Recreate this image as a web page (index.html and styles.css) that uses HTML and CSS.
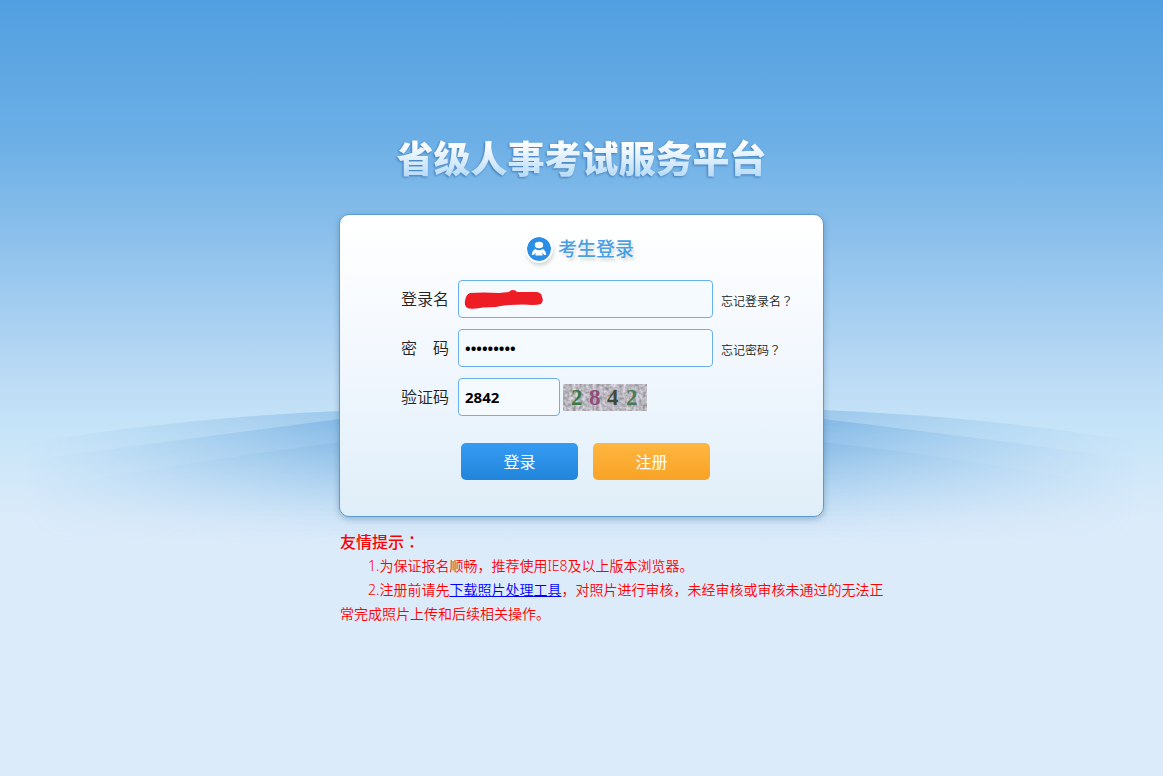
FILE: index.html
```html
<!DOCTYPE html>
<html lang="zh-CN">
  <head>
    <meta charset="UTF-8" />
    <meta name="viewport" content="width=device-width, initial-scale=1.0" />
    <title>省级人事考试服务平台</title>
    <link rel="stylesheet" href="styles.css">
  </head>
  <body>
    <!-- Background waves -->
    <svg class="waves" viewBox="0 0 1163 200" preserveAspectRatio="none" aria-hidden="true">
      <defs>
        <linearGradient id="side" x1="0" x2="1" y1="0" y2="0">
          <stop offset="0.02" stop-color="#fff" stop-opacity="0" />
          <stop offset="0.3" stop-color="#fff" stop-opacity="1" />
          <stop offset="0.7" stop-color="#fff" stop-opacity="1" />
          <stop offset="0.98" stop-color="#fff" stop-opacity="0" />
        </linearGradient>
        <mask id="fade">
          <rect width="1163" height="200" fill="url(#side)" />
        </mask>
        <linearGradient id="wave1" gradientUnits="userSpaceOnUse" x1="0" x2="0" y1="20" y2="165">
          <stop offset="0" stop-color="#7fb5e3" stop-opacity="0.65" />
          <stop offset="1" stop-color="#a9d0f0" stop-opacity="0" />
        </linearGradient>
        <linearGradient id="wave2" gradientUnits="userSpaceOnUse" x1="0" x2="0" y1="30" y2="160">
          <stop offset="0" stop-color="#5b9dd8" stop-opacity="0.5" />
          <stop offset="1" stop-color="#9cc8ec" stop-opacity="0" />
        </linearGradient>
        <linearGradient id="wave3" gradientUnits="userSpaceOnUse" x1="0" x2="0" y1="50" y2="140">
          <stop offset="0" stop-color="#5b9dd8" stop-opacity="0.25" />
          <stop offset="1" stop-color="#9cc8ec" stop-opacity="0" />
        </linearGradient>
      </defs>
      <g mask="url(#fade)">
        <path fill="url(#wave1)" d="M0 68Q170 38 340 31Q581 18 823 30Q1000 37 1163 66V200H0Z" />
        <path fill="url(#wave2)" d="M0 84Q170 61 340 39Q581 20 823 39Q1000 60 1163 84V200H0Z" />
        <path fill="url(#wave3)" d="M0 116Q170 84 340 62Q581 40 823 62Q1000 82 1163 116V200H0Z" />
      </g>
    </svg>

    <div class="wrapper">
      <h1 class="site-title">省级人事考试服务平台</h1>

      <form class="login-card">
        <h2 class="login-title">
          <svg class="user-icon" viewBox="0 0 24 24" aria-hidden="true">
            <circle cx="12" cy="12" r="12" fill="#2b8fe8" />
            <ellipse cx="12" cy="8" rx="4.2" ry="3.2" fill="#fff" />
            <path fill="#fff" d="M8 12Q12 14.500 16 12Q18.800 13.500 19.300 17.400Q17.800 18.600 16.600 17.300L15.500 15.500V18.600H8.500V15.500L7.400 17.300Q6.200 18.600 4.700 17.400Q5.200 13.500 8 12Z" />
          </svg>
          <span>考生登录</span>
        </h2>

        <div class="form-row">
          <label for="username">登录名</label>
          <div class="input-box">
            <input type="text" id="username" name="username" />
            <svg class="scribble" viewBox="0 0 80 20" aria-hidden="true">
              <path fill="#ee1c25" d="M7 3Q20 2 36 3L46 2Q47 0 50 0Q53 0 54 2L74 2Q79 3 79 7Q81 11 78 14Q73 15.500 60 14.500L46 15Q36 16 33 17L20 17.500Q14 19 6 18.500Q1 17 2 11Q3 4 7 3Z" />
            </svg>
          </div>
          <a class="forgot" href="#">忘记登录名<span class="mark" lang="ja">？</span></a>
        </div>

        <div class="form-row">
          <label for="password">密　码</label>
          <div class="input-box">
            <input type="password" id="password" name="password" value="123456789" />
          </div>
          <a class="forgot" href="#">忘记密码<span class="mark" lang="ja">？</span></a>
        </div>

        <div class="form-row">
          <label for="captcha">验证码</label>
          <input type="text" class="captcha-input" id="captcha" name="captcha" value="2842" />
          <svg class="captcha-img" viewBox="0 0 84 27" role="img" aria-label="验证码图片">
            <filter id="noise" x="0" y="0" width="100%" height="100%" color-interpolation-filters="sRGB">
              <feTurbulence type="fractalNoise" baseFrequency="0.3" numOctaves="2" seed="4" />
              <feColorMatrix type="matrix" values="0.5 0.2 0 0 0.38  0.5 0.1 0 0 0.42  0.5 0.2 0 0 0.4  0 0 0 0 1" />
            </filter>
            <rect width="84" height="27" filter="url(#noise)" />
            <g class="captcha-text">
              <text x="8" y="21" fill="#3b7a45">2</text>
              <text x="26" y="21" fill="#8d4f7d">8</text>
              <text x="44" y="21" fill="#3f4a38">4</text>
              <text x="63" y="21" fill="#4c7a58">2</text>
            </g>
          </svg>
        </div>

        <div class="btn-row">
          <button type="submit" class="btn btn-login">登录</button>
          <button type="button" class="btn btn-register">注册</button>
        </div>
      </form>

      <div class="tips">
        <h3>友情提示<span class="mark" lang="ja">：</span></h3>
        <p>1.为保证报名顺畅，推荐使用IE8及以上版本浏览器。</p>
        <p>2.注册前请先<a href="#">下载照片处理工具</a>，对照片进行审核，未经审核或审核未通过的无法正常完成照片上传和后续相关操作。</p>
      </div>
    </div>
  </body>
</html>
```
FILE: styles.css
```css
* {
  box-sizing: border-box;
}

body {
  margin: 0;
  min-height: 100vh;
  position: relative;
  background: #dbebfa linear-gradient(#519fe0 0, #6cafe6 140px, #86bdea 220px, #bcdbf5 380px, #c6e4f8 430px, #dbebfa 520px) no-repeat;
  font-family: "Noto Sans", "Noto Sans CJK SC", sans-serif;
  font-size: 14px;
  font-weight: 350;
  line-height: 24px;
}

h1,
h2,
h3,
p {
  margin: 0;
}

.mark {
  font-family: "Noto Sans CJK JP", sans-serif;
  line-height: 1;
}

.waves {
  position: absolute;
  top: 380px;
  left: 0;
  width: 100%;
  height: 200px;
}

.wrapper {
  position: relative;
  max-width: 623px;
  margin: 0 auto;
  padding-top: 130px;
}

.site-title {
  margin-bottom: 30px;
  font-family: "Noto Sans CJK SC", sans-serif;
  font-size: 37px;
  font-weight: 900;
  line-height: 54px;
  text-align: center;
  color: transparent;
  background: linear-gradient(#fff 25%, #b9dcf8 85%);
  -webkit-background-clip: text;
  background-clip: text;
  filter: drop-shadow(-1px 1px 1px rgba(40, 100, 165, 0.7));
}

/* Login card */
.login-card {
  max-width: 485px;
  margin: 0 auto;
  padding: 19px 0 36px 61px;
  border: 1px solid #5b9bd0;
  border-radius: 10px;
  background: linear-gradient(#fff, #f3f8fe 45%, #dfeef9);
  box-shadow: 0 2px 6px rgba(60, 100, 140, 0.4);
}

.login-title {
  display: flex;
  justify-content: center;
  align-items: center;
  gap: 7px;
  margin: 0 2px 16px -61px;
  font-size: 19px;
  font-weight: 500;
  line-height: 30px;
  color: #4a9fe3;
  text-shadow: 0 0 2px #fff, 2px 3px 3px rgba(0, 0, 0, 0.15);
}

.user-icon {
  width: 24px;
  height: 24px;
  border-radius: 50%;
  box-shadow: 0 0 0 2px #fff, 1px 3px 4px 1px rgba(0, 0, 0, 0.2);
}

.form-row {
  display: flex;
  align-items: center;
  margin-bottom: 11px;
}

.form-row label {
  width: 57px;
  font-size: 16px;
  color: #222;
}

.input-box {
  position: relative;
  width: 255px;
}

.form-row input {
  width: 100%;
  height: 38px;
  padding: 0 6px;
  border: 1px solid #69b1ec;
  border-radius: 4px;
  background: #f5faff;
  font-family: "Noto Sans", sans-serif;
  font-size: 15px;
  font-weight: bold;
  color: #000;
}

.form-row .captcha-input {
  width: 102px;
}

/* Covers the account name */
.scribble {
  position: absolute;
  top: 10px;
  left: 5px;
  width: 80px;
  height: 20px;
}

.forgot {
  margin-left: 8px;
  padding-top: 6px;
  font-size: 12px;
  color: #222;
  text-decoration: none;
}

.captcha-img {
  width: 84px;
  height: 27px;
  margin-left: 3px;
}

.captcha-text {
  font-family: "Liberation Serif", serif;
  font-size: 23px;
  font-weight: bold;
}

.btn-row {
  display: flex;
  gap: 15px;
  margin-top: 27px;
  padding-left: 60px;
}

.btn {
  width: 117px;
  height: 37px;
  padding: 0 0 2px;
  border: none;
  border-radius: 5px;
  font-family: "Noto Sans CJK SC", sans-serif;
  font-size: 16px;
  color: #fff;
  cursor: pointer;
}

.btn-login {
  background: linear-gradient(#359bf3, #2285dc);
}

.btn-register {
  background: linear-gradient(#ffb641, #f7a325);
}

/* Tips under the card */
.tips {
  padding: 13px 0 0 70px;
  color: #f00;
}

.tips h3 {
  font-size: 16px;
  font-weight: 500;
}

.tips p {
  text-indent: 2em;
}

.tips a {
  color: #00f;
}
```
